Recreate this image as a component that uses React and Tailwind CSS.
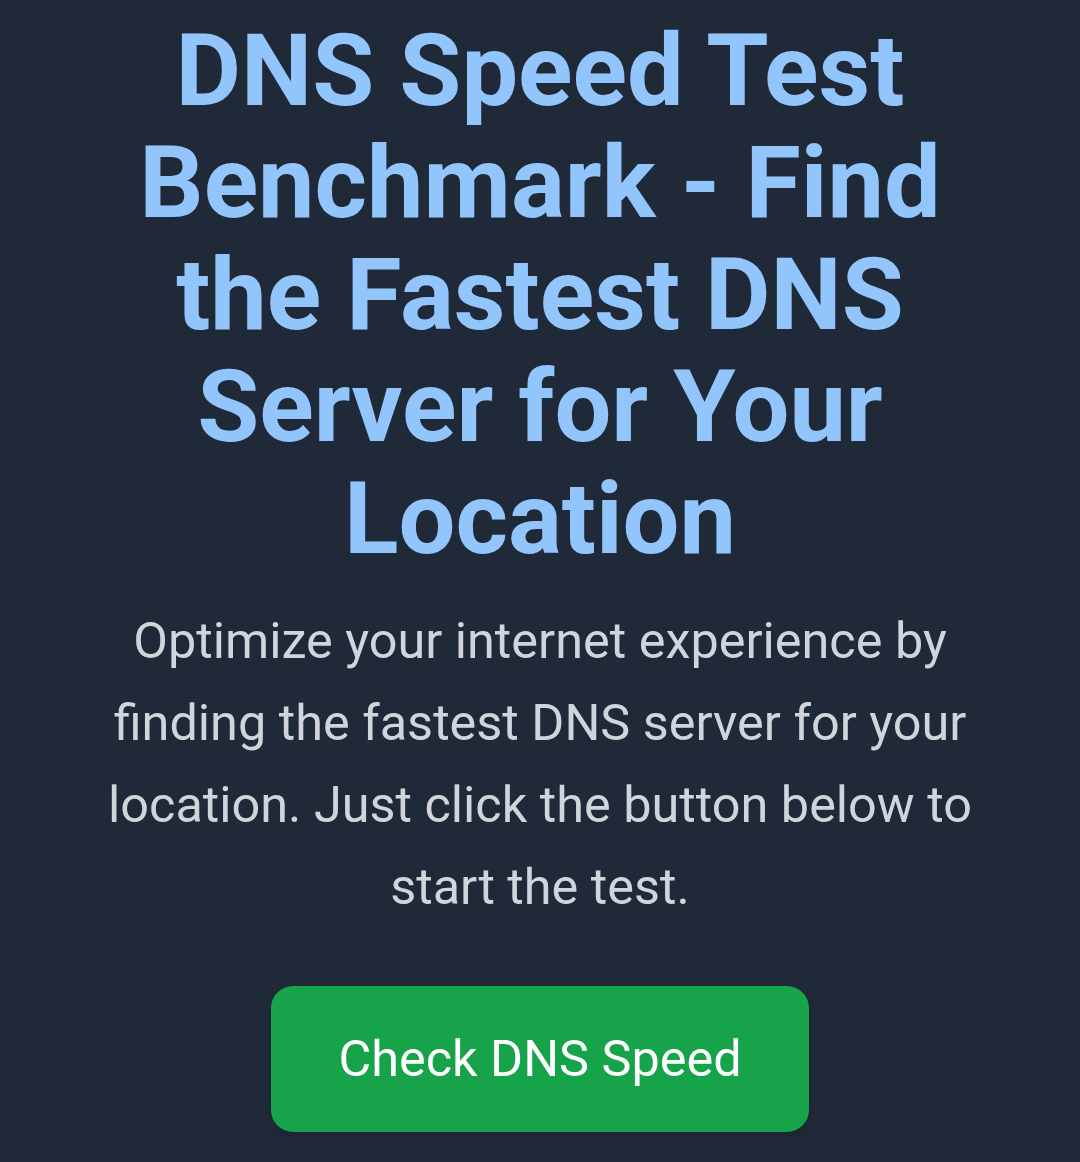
import React from 'react';

// Page rendered at the phone's 2.8x scale so it fills the 1080px window
function App() {
  return (
    <div className="min-h-[1162px] w-full bg-[#1f2937] font-['Roboto',sans-serif]">
      <div className="flex flex-col items-center px-[90px] pt-[14.5px] text-center">
        <h1 className="text-[100.8px] font-bold leading-[112px] text-[#93c5fd]">
          DNS Speed Test Benchmark - Find the Fastest DNS Server for Your Location
        </h1>
        <p className="mt-[25.5px] text-[50.4px] leading-[81.9px] text-[#d1d5db]">
          Optimize your internet experience by finding the fastest DNS server for your location. Just click the button below to start the test.
        </p>
        <button className="mt-[58.4px] rounded-[22px] bg-[#16a34a] px-[67.2px] py-[33.6px] text-[50.4px] leading-[78.4px] text-white shadow-md">
          Check DNS Speed
        </button>
      </div>
    </div>
  );
}

export default App;
